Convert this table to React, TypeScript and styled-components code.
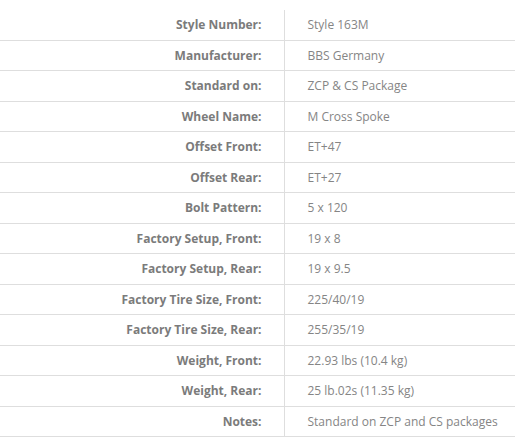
import styled, { createGlobalStyle } from "styled-components";

const GlobalStyle = createGlobalStyle`
  body {
    margin: 0;
    background: #fff;
    font-family: "Open Sans", "Liberation Sans", sans-serif;
  }
`;

const SpecsTable = styled.table`
  width: 515px;
  margin-top: 10px;
  border-collapse: collapse;
  font-size: 12px;
  line-height: 19.5px;
`;

const Row = styled.tr<{ $last?: boolean }>`
  border-top: 1px solid #dedede;

  &:first-child {
    border-top: none;
  }

  &:last-child {
    border-bottom: 1px solid #dedede;
  }
`;

const Label = styled.th`
  width: 284px;
  box-sizing: border-box;
  padding: 5px 22px 5px 0;
  text-align: right;
  font-weight: 700;
  color: #7b7b7b;
  border-right: 1px solid #dedede;
  white-space: nowrap;
`;

const Value = styled.td`
  padding: 5px 0 5px 23px;
  color: #858585;
  white-space: nowrap;
`;

const specs: [string, string][] = [
  ["Style Number:", "Style 163M"],
  ["Manufacturer:", "BBS Germany"],
  ["Standard on:", "ZCP & CS Package"],
  ["Wheel Name:", "M Cross Spoke"],
  ["Offset Front:", "ET+47"],
  ["Offset Rear:", "ET+27"],
  ["Bolt Pattern:", "5 x 120"],
  ["Factory Setup, Front:", "19 x 8"],
  ["Factory Setup, Rear:", "19 x 9.5"],
  ["Factory Tire Size, Front:", "225/40/19"],
  ["Factory Tire Size, Rear:", "255/35/19"],
  ["Weight, Front:", "22.93 lbs (10.4 kg)"],
  ["Weight, Rear:", "25 lb.02s (11.35 kg)"],
  ["Notes:", "Standard on ZCP and CS packages"],
];

export default function App() {
  return (
    <>
      <GlobalStyle />
      <SpecsTable>
        <tbody>
          {specs.map(([label, value]) => (
            <Row key={label}>
              <Label>{label}</Label>
              <Value>{value}</Value>
            </Row>
          ))}
        </tbody>
      </SpecsTable>
    </>
  );
}
